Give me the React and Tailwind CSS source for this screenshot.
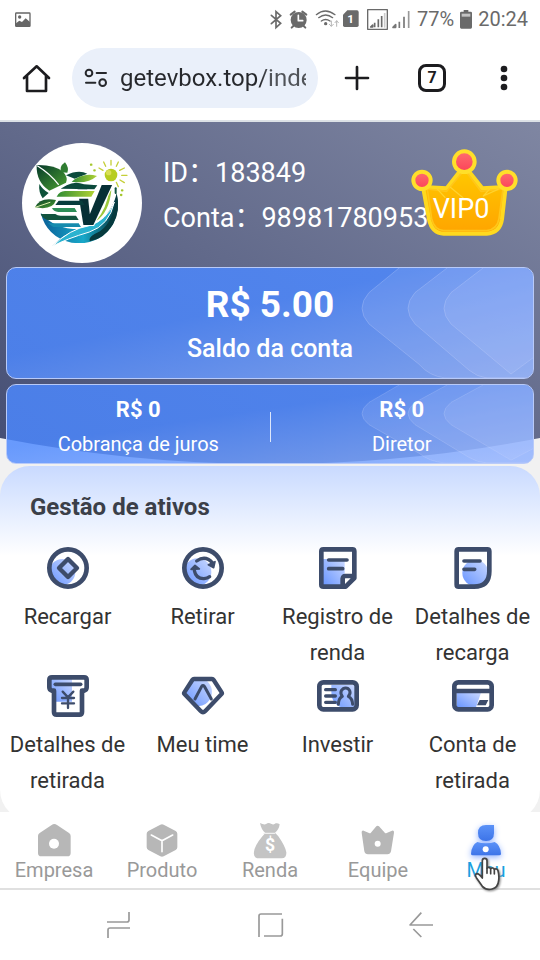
import React from "react";

function Icon({ box, className = "", children }) {
  return (
    <svg
      viewBox={box.join(" ")}
      width={box[2] / 3}
      height={box[3] / 3}
      className={"block shrink-0 overflow-visible " + className}
      fill="none"
      strokeLinecap="round"
      strokeLinejoin="round"
      aria-hidden="true"
    >
      {children}
    </svg>
  );
}

function SharedGradients() {
  return (
    <svg className="absolute h-0 w-0" aria-hidden="true">
      <defs>
        <linearGradient id="tint" x1="0" y1="1" x2="1" y2="0">
          <stop offset="0" stopColor="#6794ff" />
          <stop offset="1" stopColor="#cbd9ff" />
        </linearGradient>
        <linearGradient id="gold" x1="0" y1="0" x2="0" y2="1">
          <stop offset="0" stopColor="#ffc800" />
          <stop offset="1" stopColor="#ffa400" />
        </linearGradient>
        <linearGradient id="ruby" x1="0" y1="0" x2="0" y2="1">
          <stop offset="0" stopColor="#ff6e6e" />
          <stop offset="1" stopColor="#fb4259" />
        </linearGradient>
        <linearGradient id="leaf" x1="0" y1="0" x2="1" y2="1">
          <stop offset="0" stopColor="#06392b" />
          <stop offset="1" stopColor="#4da32f" />
        </linearGradient>
        <linearGradient id="lime" x1="0" y1="0" x2="1" y2="0">
          <stop offset="0" stopColor="#2f8b33" />
          <stop offset="1" stopColor="#b2d334" />
        </linearGradient>
        <linearGradient id="sea" x1="0" y1="0" x2="1" y2="0">
          <stop offset="0" stopColor="#0b5f98" />
          <stop offset="0.55" stopColor="#18a8c9" />
          <stop offset="1" stopColor="#05343c" />
        </linearGradient>
        <linearGradient id="hero" x1="0" y1="1" x2="1" y2="0">
          <stop offset="0" stopColor="#444d73" />
          <stop offset="1" stopColor="#7f86a2" />
        </linearGradient>
        <linearGradient id="person" x1="0" y1="0" x2="0" y2="1">
          <stop offset="0" stopColor="#5b92f8" />
          <stop offset="1" stopColor="#3d74e8" />
        </linearGradient>
      </defs>
    </svg>
  );
}

function StatusBar() {
  return (
    <header className="flex h-[38px] items-center bg-white pr-3 pl-[15px] text-xl text-[#6a6a6a]">
      <Icon box={[45, 30, 48, 45]}>
        <rect x="47" y="33" width="43" height="40" rx="2" stroke="#666" strokeWidth="4" />
        <path d="M48 64 58 56 66 60 77 49 90 60V73H48Z" fill="#666" />
        <circle cx="59" cy="45" r="5" fill="#666" />
      </Icon>
      <div className="ml-auto flex items-center">
        <Icon box={[6, 27, 36, 57]}>
          <path d="M10 43 38 67 24 80V32L38 44 10 68" stroke="#6a6a6a" strokeWidth="5" strokeLinejoin="miter" />
        </Icon>
        <Icon box={[66, 27, 54, 57]} className="ml-2">
          <path d="m68 41 12-9M103 32l12 9M76 75l-5 5M107 75l5 5" stroke="#6a6a6a" strokeWidth="6" />
          <circle cx="92" cy="57" r="24" fill="#6a6a6a" />
          <path d="M91 43v16h13" stroke="#fff" strokeWidth="5" />
        </Icon>
        <Icon box={[141, 27, 69, 57]} className="ml-2">
          <path d="M142 41q27-22 56 0M149 50q21-16 42 0M157 60q13-9 26 0" stroke="#6a6a6a" strokeWidth="4" />
          <circle cx="170" cy="68" r="5" fill="#6a6a6a" />
          <path d="M187 60v15m-6-5 6 6 6-6M203 76V60m-5 5 5-6 5 6" stroke="#b5b5b5" strokeWidth="3" />
        </Icon>
        <Icon box={[222, 27, 48, 54]} className="ml-1">
          <path d="M235 28h29q5 0 5 5v40q0 5-5 5h-37q-5 0-5-5V41Z" fill="#6a6a6a" />
          <text x="245" y="67" fontSize="35" fontWeight="700" textAnchor="middle" fill="#fff">1</text>
        </Icon>
        <Icon box={[294, 21, 63, 63]} className="ml-2">
          <rect x="296" y="23" width="59" height="59" stroke="#6a6a6a" strokeWidth="4" />
          <path d="M305 75h6v-6ZM317 76V62M328 76V52M338 76V42" fill="#6a6a6a" stroke="#6a6a6a" strokeWidth="5" strokeLinecap="butt" />
          <path d="M347 77V33" stroke="#ccc" strokeWidth="5" strokeLinecap="butt" />
        </Icon>
        <Icon box={[369, 24, 57, 60]} className="ml-1">
          <path d="M372 79h8v-8ZM391 81V62M405 81V47" fill="#777" stroke="#777" strokeWidth="5" strokeLinecap="butt" />
          <path d="M419 81V30" stroke="#999" strokeWidth="5" strokeLinecap="butt" />
        </Icon>
        <span className="ml-1.5">77%</span>
        <Icon box={[573, 24, 36, 57]} className="ml-1.5">
          <path d="M584 24h14v5h7q4 0 4 4v43q0 4-4 4h-28q-4 0-4-4V33q0-4 4-4h7Z" fill="#6a6a6a" />
          <path d="M578 35h26v9h-26Z" fill="#c4c4c4" />
        </Icon>
        <time className="ml-1.5">20:24</time>
      </div>
    </header>
  );
}

function BrowserBar() {
  return (
    <div className="flex items-center border-b-2 border-[#dce1e6] bg-white pt-2.5 pb-3">
      <button aria-label="Página inicial" className="flex w-[72px] justify-center">
        <Icon box={[69, 195, 81, 81]}>
          <path d="M72 234 110 199 147 234M81 229v44h57v-44" stroke="#1c1c1f" strokeWidth="8" />
        </Icon>
      </button>
      <div className="flex h-[60px] min-w-0 flex-1 items-center rounded-full bg-[#eaf0fa] pr-3 pl-3">
        <button aria-label="Informações do site">
          <Icon box={[252, 204, 72, 60]}>
            <path d="M290 219h28M258 248h28" stroke="#26282c" strokeWidth="6" />
            <circle cx="267" cy="219" r="10" stroke="#26282c" strokeWidth="6" />
            <circle cx="308" cy="248" r="10" stroke="#26282c" strokeWidth="6" />
          </Icon>
        </button>
        <input
          aria-label="Endereço"
          defaultValue="getevbox.top/index"
          className="ml-3 min-w-0 flex-1 bg-linear-to-r from-[#26282c] from-75% to-[#505358] to-80% bg-clip-text text-2xl text-transparent outline-none"
        />
      </div>
      <button aria-label="Nova guia" className="flex w-[78px] justify-center">
        <Icon box={[225, 198, 72, 72]}>
          <path d="M228 234h66M261 201v66" stroke="#1c1c1f" strokeWidth="8" />
        </Icon>
      </button>
      <button aria-label="Guias abertas" className="flex w-[72px] justify-center">
        <span className="flex h-7 w-7 items-center justify-center rounded-lg border-[3px] border-[#1c1c1f] text-base font-bold text-[#1c1c1f]">
          7
        </span>
      </button>
      <button aria-label="Mais opções" className="flex w-[72px] justify-center">
        <Icon box={[690, 195, 24, 78]}>
          <g fill="#1c1c1f">
            <circle cx="702" cy="207" r="10" />
            <circle cx="702" cy="234" r="10" />
            <circle cx="702" cy="261" r="10" />
          </g>
        </Icon>
      </button>
    </div>
  );
}

function Logo() {
  return (
    <Icon box={[66, 63, 360, 360]} className="rounded-full bg-white">
      <path d="M122 272Q140 345 215 362 300 372 340 305 362 265 350 215 330 290 262 322 205 340 157 373 190 335 238 322 160 320 122 272Z" fill="url(#sea)" />
      <path d="M350 212Q362 262 338 308 312 350 270 358 262 345 300 328 345 295 350 212Z" fill="#063a3e" />
      <path d="M334 205Q328 270 288 298 322 255 326 208Z" fill="#9cc83c" />
      <path d="M157 373Q210 320 268 311 320 295 343 240 328 310 268 330 200 350 157 373Z" fill="#2bb3d0" stroke="#fff" strokeWidth="3" />
      <path d="M122 276H166Q172 281 182 281H228L236 294H142Q127 288 122 276Z" fill="#12543f" />
      <path d="M144 304H236L243 315H160Z" fill="#168bae" />
      <path d="M156 258H224L231 270H175Q160 269 156 258Z" fill="#2e8f58" />
      <text x="272" y="309" textAnchor="middle" fontSize="164" fontWeight="900" fontStyle="italic" fill="#062f35" stroke="#fff" strokeWidth="6" paintOrder="stroke">V</text>
      <path d="M176 202H292L281 230H160Z" fill="#fff" />
      <path d="M110 129Q165 128 190 150 205 168 198 182L148 206Q108 180 110 129Z" fill="url(#leaf)" />
      <path d="M113 132Q150 155 175 187" stroke="#fff" strokeWidth="4" />
      <path d="M118 186Q130 205 146 213L128 229Q115 210 118 186Z" fill="#0c5138" />
      <path d="M198 160Q235 142 262 155L224 170Z" fill="#0b4a3b" />
      <path d="M185 151Q175 135 195 121 208 138 202 152Z" fill="#2f7c31" />
      <path d="M215 179Q250 150 291 162 262 187 215 179Z" fill="url(#lime)" />
      <path d="M182 200 200 190Q225 176 252 187L292 190 283 202Z" fill="#0b493b" />
      <path d="M170 224Q178 208 195 207H284L274 224Z" fill="url(#lime)" />
      <path d="M105 256Q120 224 168 234 158 266 105 256Z" fill="url(#leaf)" />
      <path d="M106 256 150 241" stroke="#dff0b0" strokeWidth="3" />
      <path d="M176 236H246L254 249H166Z" fill="#073c3c" />
      <path d="M333 115v14M311 120l6 13M355 120l-6 13M297 138l12 7M373 138l-14 7M381 160h-16M373 182l-13-8M355 194l-6-13" stroke="#c5cf39" strokeWidth="4" />
      <circle cx="333" cy="159" r="19" fill="#b7cd1f" />
      <circle cx="326" cy="152" r="8" fill="#d9df55" />
      <path d="M273 128h1M283 145h1M366 205h1M363 219h1" stroke="#a5c72d" strokeWidth="7" />
      <path d="M347 199v14" stroke="#125540" strokeWidth="6" />
    </Icon>
  );
}

function VipCrown() {
  return (
    <Icon box={[423, 78, 324, 264]}>
      <path d="M459 195 530 199 572 145H594L637 199 707 195 696 292Q690 333 650 335H521Q486 334 477 292Z" fill="url(#gold)" stroke="#ffd91f" strokeWidth="12" />
      <path d="M472 201 530 208 578 150H589L633 208 699 201 687 290Q682 322 650 326H521Q492 323 485 290Z" stroke="#ffc61a" strokeWidth="5" />
      <path d="m500 199 25 27M541 196l38 31M640 222l44-20M640 222l18-20" stroke="#ffd22e" strokeWidth="4" />
      <g fill="url(#ruby)" stroke="#ffdf2a" strokeWidth="12">
        <circle cx="583" cy="119" r="31" />
        <circle cx="456" cy="175" r="26" />
        <circle cx="711" cy="175" r="26" />
      </g>
      <text x="488" y="287" fontSize="81" fill="#fff">VIP0</text>
    </Icon>
  );
}

function CardSheen() {
  return (
    <svg
      viewBox="0 0 172 112"
      preserveAspectRatio="none"
      className="absolute inset-y-0 right-0 h-full w-[172px]"
      fill="#c3d2ff"
      fillOpacity="0.15"
      stroke="#d5e0ff"
      strokeOpacity="0.25"
      aria-hidden="true"
    >
      <path d="M38 0 8 25Q-6 41 8 57L58 98Q68 110 84 112H174V-2H38Z" />
      <path d="M86 0 54 25Q40 41 54 57L108 104Q116 111 126 112H174V-2H86Z" />
      <path d="M122 0 90 25Q76 41 90 57L150 108 174 90V-2H122Z" />
    </svg>
  );
}

const cardClass =
  "relative overflow-hidden rounded-[10px] border border-[#b8caf9] bg-linear-to-br from-[#4c88ff]/83 from-40% to-[#86acff]/83 text-center text-white";

function Account() {
  return (
    <section className="relative px-1.5 pb-0.5">
      <svg
        viewBox="0 0 540 343"
        preserveAspectRatio="none"
        className="absolute inset-0 h-full w-full"
        aria-hidden="true"
      >
        <path d="M0 0H540V315Q405 341 270 341T0 315Z" fill="url(#hero)" />
      </svg>
      <div className="relative flex h-[145px] items-start pt-[21px] pr-[15px] pl-4">
        <Logo />
        <div className="ml-[21px] min-w-0 flex-1 pt-2 text-[27px] leading-[45px] whitespace-nowrap text-white">
          <p>ID：183849</p>
          <p>Conta：98981780953</p>
        </div>
        <div className="pt-[5px]">
          <VipCrown />
        </div>
      </div>
      <div className={cardClass + " h-28 pt-4"}>
        <CardSheen />
        <p className="relative text-[37px] leading-[42px] font-bold">R$ 5.00</p>
        <p className="relative text-[25px] leading-[46px] font-medium">Saldo da conta</p>
      </div>
      <div className={cardClass + " mt-[5px] flex h-20 items-center pt-[5px]"}>
        <CardSheen />
        <div className="relative flex-1">
          <p className="text-[22px] leading-[34px] font-bold">R$ 0</p>
          <p className="text-xl leading-[34px]">Cobrança de juros</p>
        </div>
        <div className="relative h-[30px] w-px bg-white/80" />
        <div className="relative flex-1">
          <p className="text-[22px] leading-[34px] font-bold">R$ 0</p>
          <p className="text-xl leading-[34px]">Diretor</p>
        </div>
      </div>
    </section>
  );
}

const ink = "#3d4c6b";

const assets = [
  {
    label: "Recargar",
    icon: (
      <Icon box={[141, 201, 126, 126]}>
        <circle cx="187" cy="276" r="39" fill="url(#tint)" />
        <circle cx="204" cy="264" r="56" stroke={ink} strokeWidth="14" />
        <path d="m204 237 27 27-27 27-27-27Z" stroke={ink} strokeWidth="13" />
      </Icon>
    ),
  },
  {
    label: "Retirar",
    icon: (
      <Icon box={[546, 201, 126, 126]}>
        <circle cx="593" cy="276" r="41" fill="url(#tint)" />
        <circle cx="609" cy="264" r="56" stroke={ink} strokeWidth="14" />
        <path d="M590 243Q616 224 637 248M583 272Q588 297 612 296 622 295 629 290" stroke={ink} strokeWidth="10" />
        <path d="m625 254 20-9-4 18ZM573 268l12-12 13 11Z" fill={ink} stroke={ink} strokeWidth="5" />
      </Icon>
    ),
  },
  {
    label: "Registro de renda",
    icon: (
      <Icon box={[141, 201, 126, 126]}>
        <path d="M159 237h65v56l-12 25h-53Z" fill="url(#tint)" />
        <path d="M160 208h87q6 0 6 6v80l-26 26h-67q-6 0-6-6V214q0-6 6-6ZM218 318v-22q1-8 8-8h26" stroke={ink} strokeWidth="14" />
        <path d="M176 240h55M176 266h42" stroke={ink} strokeWidth="11" />
      </Icon>
    ),
  },
  {
    label: "Detalhes de recarga",
    icon: (
      <Icon box={[546, 201, 126, 126]}>
        <circle cx="616" cy="279" r="39" fill="url(#tint)" />
        <path d="M566 208h86q6 0 6 6v60q0 46-46 46h-46q-6 0-6-6V214q0-6 6-6Z" stroke={ink} strokeWidth="14" />
        <path d="M582 243h48M582 268h32" stroke={ink} strokeWidth="11" />
      </Icon>
    ),
  },
  {
    label: "Detalhes de retirada",
    icon: (
      <Icon box={[141, 45, 126, 126]}>
        <path d="M150 53h66v72h-54V94h-12Z" fill="url(#tint)" />
        <path d="M156 52h96q8 0 8 8v22q0 8-8 10h-6v64q0 8-8 8h-68q-8 0-8-8V92h-6q-8-2-8-10V60q0-8 8-8Z" stroke={ink} strokeWidth="14" />
        <path d="M166 73h76" stroke={ink} strokeWidth="11" />
        <path d="m188 95 16 17 16-17M204 112v32M186 114h36M186 130h36" stroke={ink} strokeWidth="7" />
      </Icon>
    ),
  },
  {
    label: "Meu time",
    icon: (
      <Icon box={[546, 45, 126, 126]}>
        <path d="M555 98 580 60H618Q646 85 630 118 617 139 595 138Z" fill="url(#tint)" />
        <path d="M582 57h54q3 0 5 3l24 37q2 3-1 6l-48 50q-7 7-14 0l-48-50q-3-3-1-6l24-37q2-3 5-3Z" stroke={ink} strokeWidth="13" />
        <path d="m585 117 20-38q4-5 8 0l21 38" stroke={ink} strokeWidth="9" />
      </Icon>
    ),
  },
  {
    label: "Investir",
    icon: (
      <Icon box={[141, 45, 126, 126]}>
        <path d="M184 75h71v70h-28q-43-8-43-50Z" fill="url(#tint)" />
        <rect x="148" y="67" width="112" height="81" rx="12" stroke={ink} strokeWidth="14" />
        <path d="M167 89h29M167 108h29M167 127h29" stroke={ink} strokeWidth="10" />
        <path d="M205 133q1-19 12-24-7-9-3-17 5-8 13-8t12 8q4 9-4 17 12 6 13 24" stroke={ink} strokeWidth="9" />
      </Icon>
    ),
  },
  {
    label: "Conta de retirada",
    icon: (
      <Icon box={[546, 45, 126, 126]}>
        <path d="M560 98h73l-15 44h-58Z" fill="url(#tint)" />
        <rect x="553" y="67" width="112" height="81" rx="12" stroke={ink} strokeWidth="14" />
        <path d="M555 93h108" stroke={ink} strokeWidth="13" />
        <path d="M629 120h26l-8 16h-26Z" fill={ink} />
      </Icon>
    ),
  },
];

function Assets() {
  return (
    <section className="rounded-[30px] bg-white bg-linear-to-b from-[#c9daff] to-white to-[90px] pt-[23px] pb-[21px]">
      <h2 className="pl-[30px] text-2xl leading-9 font-bold text-[#3b3f49]">Gestão de ativos</h2>
      <ul className="mt-[22px] grid grid-cols-4 gap-y-1">
        {assets.map((item) => (
          <li key={item.label}>
            <a href="#" className="flex flex-col items-center gap-2.5 px-1 text-center text-[22px] leading-9 text-[#333]">
              {item.icon}
              {item.label}
            </a>
          </li>
        ))}
      </ul>
    </section>
  );
}

const tabs = [
  {
    label: "Empresa",
    icon: (
      <Icon box={[107, 65, 108, 108]}>
        <path d="M154 74q8-6 16 0l36 24q5 3 5 9v51q0 10-10 10h-78q-10 0-10-10v-51q0-6 5-9Z" fill="#b7b7b7" />
        <circle cx="161" cy="130" r="15" fill="#fff" />
      </Icon>
    ),
  },
  {
    label: "Produto",
    icon: (
      <Icon box={[432, 65, 108, 108]}>
        <path d="M481 73q5-3 10 0l36 19q5 3 5 8v41q0 5-5 8l-36 19q-5 2-10 0l-36-19q-5-3-5-8v-41q0-5 5-8Z" fill="#b7b7b7" />
        <path d="m454 104 32 17 32-17M486 121v33" stroke="#fff" strokeWidth="5" />
      </Icon>
    ),
  },
  {
    label: "Renda",
    icon: (
      <Icon box={[755, 65, 108, 108]}>
        <path d="M779 68q15 8 22 1 5-3 11 1 8 5 14-1 6-2 12 3-2 16-14 25l10 11q21 30 24 48 1 18-14 18h-68q-18 0-15-20 3-20 24-45l10-11q-12-9-16-30Z" fill="#c4c4c4" />
        <path d="M791 99h32" stroke="#efefef" strokeWidth="4" />
        <text x="809" y="153" textAnchor="middle" fontSize="53" fontWeight="700" fill="#fff">$</text>
      </Icon>
    ),
  },
  {
    label: "Equipe",
    icon: (
      <Icon box={[270, 65, 108, 108]}>
        <path d="M319 78q4-4 8 0l18 20q2 2 5 0l16-7q7-1 6 6l-9 56q-2 9-11 9h-58q-9 0-11-9l-8-56q-1-7 6-6l16 7q3 2 5 0Z" fill="#b7b7b7" />
        <circle cx="323" cy="130" r="9" fill="#fff" />
      </Icon>
    ),
  },
  {
    label: "Meu",
    active: true,
    icon: (
      <Icon box={[594, 65, 108, 108]} className="drop-shadow-[0_2px_3px_#8eb0ff]">
        <path d="M648 74h24v24q0 24-24 24t-24-24 24-24Z" fill="url(#person)" />
        <path d="M622 125q10 4 26 4t26-4q17 9 19 35 0 5-5 5h-80q-5 0-5-5 2-26 19-35Z" fill="url(#person)" />
        <circle cx="647" cy="147" r="9" fill="#fff" />
      </Icon>
    ),
  },
];

function HandCursor() {
  return (
    <svg viewBox="612 168 84 108" width="28" height="36" className="absolute top-11 left-1/2 -ml-3 overflow-visible drop-shadow-[1px_1px_1px_#888]" aria-hidden="true">
      <path
        d="M637 226V182q0-7 7-7t7 7v23q5-6 11 1 6-5 11 2 8-4 11 4 4 15 2 29-2 22-20 26-18 4-29-8l-18-26q-6-10 2-12 6 0 16 13Z"
        fill="#fff"
        stroke="#444"
        strokeWidth="5"
        strokeLinejoin="round"
      />
      <path d="M651 205v15M662 207v14M673 209v13" stroke="#444" strokeWidth="5" strokeLinecap="round" />
    </svg>
  );
}

function TabBar() {
  return (
    <nav className="relative -mt-2 flex border-b-2 border-[#e0e0e0] bg-white">
      {tabs.map((tab) => (
        <a
          key={tab.label}
          href="#"
          className={
            "relative flex flex-1 flex-col items-center pt-2.5 pb-1.5 text-xl leading-6 " +
            (tab.active ? "text-[#1a9fe0]" : "text-[#999]")
          }
        >
          {tab.icon}
          {tab.label}
          {tab.active && <HandCursor />}
        </a>
      ))}
    </nav>
  );
}

function SystemKeys() {
  return (
    <footer className="flex h-[70px] items-center justify-between bg-white px-[105px]">
      <button aria-label="Recentes">
        <Icon box={[315, 333, 81, 84]}>
          <path d="M321 366h60q6 0 6-6v-24M390 384h-60q-6 0-6 6v24" stroke="#999" strokeWidth="5" strokeLinecap="butt" />
        </Icon>
      </button>
      <button aria-label="Início">
        <Icon box={[768, 333, 84, 84]}>
          <path d="M777 411v-63q0-6 6-6h63M792 408h49q6 0 6-6v-46" stroke="#999" strokeWidth="5" strokeLinecap="butt" />
        </Icon>
      </button>
      <button aria-label="Voltar">
        <Icon box={[414, 333, 81, 84]}>
          <path d="M489 375h-69l34-37M430 387l24 24" stroke="#999" strokeWidth="5" strokeLinecap="butt" />
        </Icon>
      </button>
    </footer>
  );
}

export default function App() {
  return (
    <div className="min-h-screen bg-[#f1f1f1] font-['Roboto','Noto_Sans_CJK_SC',sans-serif]">
      <SharedGradients />
      <StatusBar />
      <BrowserBar />
      <main>
        <Account />
        <Assets />
      </main>
      <TabBar />
      <SystemKeys />
    </div>
  );
}
